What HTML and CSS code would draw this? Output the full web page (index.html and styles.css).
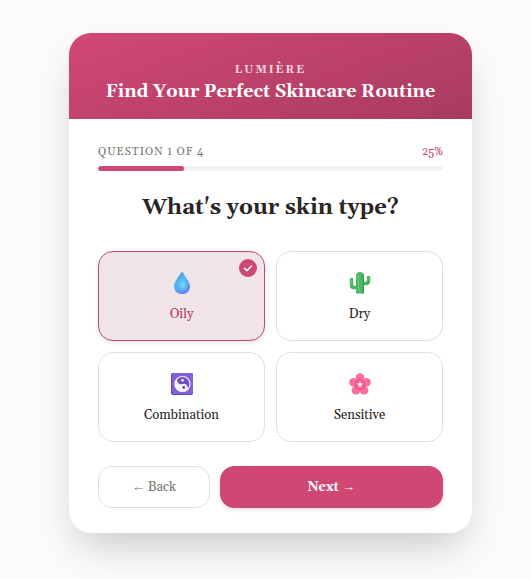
FILE: index.html
```
<!DOCTYPE html>
<html lang="en">
<head>
    <meta charset="UTF-8">
    <meta name="viewport" content="width=device-width, initial-scale=1.0">
    <title>Lumière Skincare Quiz</title>
    <link rel="stylesheet" href="styles.css">
</head>
<body>
    <main class="quiz-card">
        <header class="quiz-header">
            <p class="brand">LUMIÈRE</p>
            <h1>Find Your Perfect Skincare Routine</h1>
        </header>

        <form class="quiz-body">
            <div class="progress-info">
                <span>QUESTION 1 OF 4</span>
                <span class="percent">25%</span>
            </div>
            <div class="progress-track">
                <div class="progress-fill" style="width: 25%"></div>
            </div>

            <h2 id="question">What's your skin type?</h2>

            <div class="options" role="radiogroup" aria-labelledby="question">
                <label class="option">
                    <input type="radio" name="skin" value="oily" checked>
                    <svg class="icon" viewBox="0 0 24 24" aria-hidden="true">
                        <defs>
                            <linearGradient id="drop" x1="0" y1="0" x2="0.6" y2="1">
                                <stop offset="0" stop-color="#3f88cf"/>
                                <stop offset="0.5" stop-color="#55b9f5"/>
                                <stop offset="1" stop-color="#5a86f2"/>
                            </linearGradient>
                            <radialGradient id="shine" cx="0.5" cy="0.5" r="0.5">
                                <stop offset="0" stop-color="#7fe0ff"/>
                                <stop offset="1" stop-color="#62c4fa" stop-opacity="0"/>
                            </radialGradient>
                        </defs>
                        <path fill="url(#drop)" d="M12 1C12.800 1 13.200 1.800 13.700 2.800C15.500 6.400 20 10.800 20 15.400C20 19.900 16.600 23 12 23S4 19.900 4 15.400C4 10.800 8.500 6.400 10.300 2.800C10.800 1.800 11.200 1 12 1Z"/>
                        <ellipse fill="url(#shine)" cx="13" cy="14" rx="6" ry="8"/>
                    </svg>
                    <span>Oily</span>
                    <span class="check">
                        <svg viewBox="0 0 18 18" aria-hidden="true">
                            <path d="M5.500 9.400L7.900 11.600L12.500 7" fill="none" stroke="#fff" stroke-width="1.500" stroke-linecap="round" stroke-linejoin="round"/>
                        </svg>
                    </span>
                </label>

                <label class="option">
                    <input type="radio" name="skin" value="dry">
                    <svg class="icon" viewBox="0 0 24 24" aria-hidden="true">
                        <g fill="none" stroke="#46b361" stroke-width="3.500" stroke-linecap="round" stroke-linejoin="round">
                            <path d="M3.500 8.500V14Q3.500 16.500 6 16.500H10"/>
                            <path d="M20.500 6.500V9.500Q20.500 12.500 17.500 12.500H14"/>
                        </g>
                        <path fill="#4cb866" d="M8 5a4 4 0 0 1 8 0V22.500H8Z"/>
                        <path fill="#3a9f57" d="M14.500 3V22.500H16V5Q16 3.500 14.500 3Z"/>
                        <path d="M10.500 5V20M3 9V14M20 7V9.500" fill="none" stroke="#72cf78" stroke-width="1" stroke-linecap="round"/>
                    </svg>
                    <span>Dry</span>
                </label>

                <label class="option">
                    <input type="radio" name="skin" value="combination">
                    <svg class="icon" viewBox="0 0 24 24" aria-hidden="true">
                        <rect x="1" y="1" width="22" height="22" rx="2" fill="#6444b8"/>
                        <rect x="2" y="1" width="21" height="21" rx="2" fill="#855fd9"/>
                        <circle cx="12.500" cy="12" r="7.500" fill="#6f4cc4" stroke="#f4f0ff" stroke-width="1.200"/>
                        <path fill="#f7f4ff" d="M12.500 4A8 8 0 0 0 12.500 20A4 4 0 0 0 12.500 12A4 4 0 0 1 12.500 4Z" transform="rotate(-20 12.500 12)"/>
                        <circle cx="13.700" cy="15.500" r="1.400" fill="#6848bd"/>
                        <circle cx="12.500" cy="8.300" r="1.400" fill="#f7f4ff"/>
                    </svg>
                    <span>Combination</span>
                </label>

                <label class="option">
                    <input type="radio" name="skin" value="sensitive">
                    <svg class="icon" viewBox="0 0 24 24" aria-hidden="true">
                        <g fill="#fa6e99">
                            <circle cx="12" cy="5.500" r="4.300"/>
                            <circle cx="18.500" cy="10.300" r="4.300"/>
                            <circle cx="16" cy="18.200" r="4.300"/>
                            <circle cx="8" cy="18.200" r="4.300"/>
                            <circle cx="5.500" cy="10.300" r="4.300"/>
                        </g>
                        <circle cx="12" cy="12.500" r="5.500" fill="#f0568a"/>
                        <path fill="#fff0f4" d="M12 8L12.800 11.300L16 11.400L13.200 13.200L14.300 16L12 14.200L9.700 16L10.800 13.200L8 11.400L11.200 11.300Z"/>
                    </svg>
                    <span>Sensitive</span>
                </label>
            </div>

            <div class="actions">
                <button type="button" class="btn-back"><span class="arrow">←</span> Back</button>
                <button type="submit" class="btn-next">Next <span class="arrow">→</span></button>
            </div>
        </form>
    </main>
</body>
</html>
```
FILE: styles.css
```
* {
    box-sizing: border-box;
}
body {
    margin: 0;
    padding: 33px 58px 46px 69px;
    background-color: #fcfbfa;
    color: #292524;
    font-family: Georgia, Gelasio, "Liberation Serif", serif;
}
.quiz-card {
    max-width: 480px;
    margin: 0 auto;
    background-color: #fff;
    border-radius: 22px;
    overflow: hidden;
    box-shadow: 0 20px 40px -10px rgba(0, 0, 0, 0.22);
}
.quiz-header {
    padding: 29px 20px 13px;
    background: linear-gradient(160deg, #d24875, #a83b60);
    color: #fff;
    text-align: center;
}
.brand {
    margin: 0;
    font-size: 11px;
    font-weight: bold;
    line-height: 16px;
    letter-spacing: 2px;
    color: #f8d9e3;
}
h1 {
    margin: 0;
    font-size: 18px;
    line-height: 28px;
}
.quiz-body {
    padding: 25px 29px;
}
.progress-info {
    display: flex;
    justify-content: space-between;
    margin-bottom: 6px;
    font-size: 11px;
    line-height: 16px;
    letter-spacing: 1px;
    color: #78716c;
}
.percent {
    letter-spacing: 0;
    color: #c43b69;
}
.progress-track {
    height: 5px;
    border-radius: 3px;
    background-color: #f3f2f1;
    overflow: hidden;
}
.progress-fill {
    height: 100%;
    border-radius: 3px;
    background-color: #cf4773;
}
h2 {
    margin: 21px 0 27px;
    font-size: 22px;
    line-height: 32px;
    text-align: center;
}
.options {
    display: grid;
    grid-template-columns: 1fr 1fr;
    gap: 11px;
}
.option {
    position: relative;
    display: flex;
    flex-direction: column;
    align-items: center;
    gap: 9px;
    padding: 19px 10px 16px;
    border: 1px solid #e2e0df;
    border-radius: 15px;
    font-size: 13px;
    line-height: 20px;
    cursor: pointer;
}
.option input {
    position: absolute;
    opacity: 0;
}
.option:has(input:checked) {
    border-color: #c4476e;
    background-color: #f0e4e8;
    color: #b0345d;
    box-shadow: 0 2px 4px rgba(0, 0, 0, 0.1);
}
.icon {
    width: 24px;
    height: 24px;
}
.check {
    position: absolute;
    top: 7px;
    right: 7px;
    width: 18px;
    height: 18px;
    border-radius: 50%;
    background-color: #cf4773;
}
.check svg {
    display: block;
}
.actions {
    display: grid;
    grid-template-columns: 1fr 2fr;
    gap: 10px;
    margin-top: 24px;
}
button {
    height: 42px;
    padding: 0;
    border: 1px solid #e2e0df;
    border-radius: 14px;
    font-family: inherit;
    font-size: 13px;
    cursor: pointer;
}
.arrow {
    font-family: "Liberation Serif", serif;
}
.btn-back {
    background-color: #fff;
    color: #78716c;
}
.btn-next {
    border-color: #d04773;
    background-color: #d04773;
    color: #fff;
    font-weight: bold;
    box-shadow: 0 2px 4px rgba(0, 0, 0, 0.12);
}
```
